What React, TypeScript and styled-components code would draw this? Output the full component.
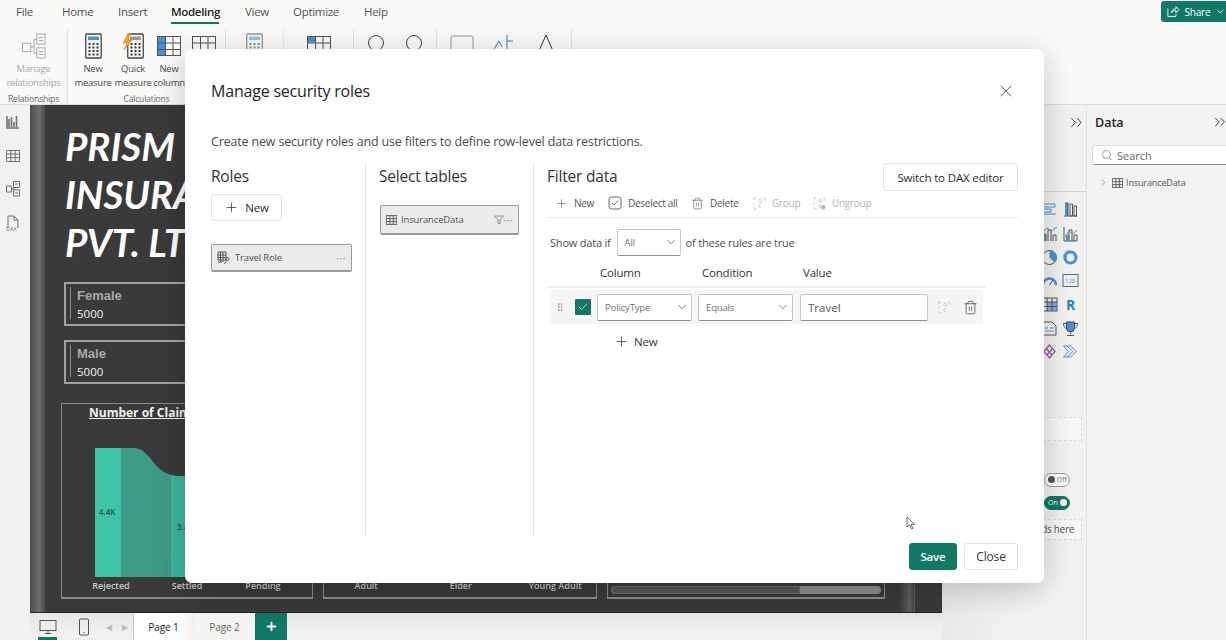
import React from "react"
import styled, { createGlobalStyle } from "styled-components"
import { ChevronDown, ChevronRight, ChevronsRight, Plus, Search, Trash2, X, Check, GripVertical } from "lucide-react"

const GlobalStyle = createGlobalStyle`
  html, body { margin: 0; padding: 0; }
  body { font-family: "Open Sans", "Noto Sans", sans-serif; color: #242424; background: #f3f3f1; overflow: hidden; }
  * { box-sizing: border-box; }
`

const Page = styled.div`
  position: relative;
  width: 1226px;
  height: 640px;
  overflow: hidden;
  display: flex;
  flex-direction: column;
`

/* ---------- top menu + ribbon ---------- */
const Top = styled.div`
  height: 105px;
  background: #fafaf9;
  border-bottom: 1px solid #dededc;
  flex: none;
`

const MenuBar = styled.div`
  height: 24px;
  display: flex;
  position: relative;
`

const MenuTab = styled.div<{ $w: number; $x: number; $active?: boolean }>`
  margin-left: ${p => p.$x}px;
  width: ${p => p.$w}px;
  flex: none;
  height: 24px;
  padding-top: 3px;
  font-size: 11.5px;
  line-height: 17px;
  letter-spacing: -0.3px;
  text-align: center;
  white-space: nowrap;
  color: ${p => (p.$active ? "#1c1c1c" : "#505050")};
  font-weight: ${p => (p.$active ? 600 : 400)};
  border-bottom: ${p => (p.$active ? "2px solid #117865" : "none")};
`

const ShareButton = styled.div`
  margin-left: auto;
  margin-top: 1px;
  width: 65px;
  height: 21px;
  background: #117865;
  border-radius: 3px 0 0 3px;
  color: #fff;
  font-size: 10px;
  letter-spacing: -0.2px;
  display: flex;
  align-items: center;
  gap: 5px;
  padding-left: 6px;
  white-space: nowrap;
`

const Ribbon = styled.div`
  display: flex;
  height: 80px;
  padding-top: 5px;
`

const RibbonGroup = styled.div<{ $w: number; $faded?: boolean }>`
  width: ${p => p.$w}px;
  flex: none;
  border-right: 1px solid #e2e2e0;
  display: flex;
  flex-direction: column;
  align-items: stretch;
  height: 76px;
  opacity: ${p => (p.$faded ? 0.55 : 1)};
`

const RibbonItems = styled.div<{ $pad?: number }>`
  flex: 1;
  display: flex;
  justify-content: ${p => (p.$pad ? "flex-start" : "center")};
  padding: 4px 0 0 ${p => p.$pad ?? 0}px;
`

const RibbonItem = styled.div<{ $w: number; $off?: boolean }>`
  width: ${p => p.$w}px;
  flex: none;
  display: flex;
  flex-direction: column;
  align-items: center;
  font-size: 9.5px;
  line-height: 14px;
  color: ${p => (p.$off ? "#a8a8a8" : "#4a4a4a")};
  text-align: center;
  white-space: nowrap;
  letter-spacing: -0.25px;
  svg { margin-bottom: 3px; }
`

const GroupLabel = styled.div`
  font-size: 8.5px;
  line-height: 12px;
  text-align: center;
  color: #666;
  letter-spacing: -0.15px;
`

/* ---------- body ---------- */
const Body = styled.div`
  flex: 1;
  display: flex;
  min-height: 0;
`

const Rail = styled.div`
  width: 30px;
  flex: none;
  background: #f2f2f0;
  display: flex;
  flex-direction: column;
  align-items: center;
  padding: 7px 4px 0 0;
  gap: 13.7px;
`

const CanvasColumn = styled.div`
  width: 912px;
  flex: none;
  display: flex;
  flex-direction: column;
`

const Canvas = styled.div`
  height: 508px;
  background: #3a3a3a;
  display: flex;
  border-bottom: 1px solid #222;
  overflow: hidden;
`

const CanvasStripe = styled.div`
  width: 15px;
  flex: none;
  background: linear-gradient(90deg, #4a4a4a, #6e6e6e 60%, #4c4c4c);
`

const CanvasInner = styled.div`
  flex: 1;
  padding: 17px 0 0 16px;
  display: flex;
  flex-direction: column;
  min-width: 0;
`

const ReportTitle = styled.div`
  padding-left: 4px;
  font-family: "Lato", sans-serif;
  font-style: italic;
  font-weight: 700;
  font-size: 38.5px;
  line-height: 48px;
  color: #fff;
  white-space: nowrap;
`

const StatGroup = styled.div`
  margin-top: 16px;
`

const StatCard = styled.div`
  width: 300px;
  height: 44px;
  margin: 0 0 14px 3px;
  border: 2px solid #a2a2a2;
  padding: 3px 0 0 4px;
  display: flex;
`

const StatBody = styled.div`
  border-left: 1px solid #8d8d8d;
  height: 32px;
  padding-left: 6px;
`

const StatLabel = styled.div`
  font-family: "Liberation Sans", sans-serif;
  font-weight: 700;
  font-size: 13px;
  line-height: 17px;
  color: #a8a8a8;
`

const StatValue = styled.div`
  font-size: 11.5px;
  line-height: 19px;
  font-weight: 500;
  color: #f0f0f0;
`

const BoxRow = styled.div`
  display: flex;
  margin-top: 5px;
  gap: 10px;
`

const ChartBox = styled.div<{ $w: number }>`
  position: relative;
  width: ${p => p.$w}px;
  height: 196px;
  border: 1px solid #8a8a8a;
  border-bottom-width: 2px;
  flex: none;
`

const ChartTitle = styled.div`
  margin-left: 27px;
  font-size: 12px;
  line-height: 17px;
  font-weight: 700;
  color: #f2f2f2;
  text-decoration: underline;
  white-space: nowrap;
`

const AxisLabels = styled.div<{ $col: number; $left: number }>`
  position: absolute;
  left: ${p => p.$left}px;
  bottom: 5px;
  font-size: 9px;
  line-height: 12px;
  font-weight: 600;
  color: #c8c8c8;
  display: grid;
  grid-auto-flow: column;
  grid-auto-columns: ${p => p.$col}px;
  text-align: center;
  white-space: nowrap;
`

const ScrollTrack = styled.div`
  position: absolute;
  left: 3px;
  right: 3px;
  bottom: 3px;
  height: 8px;
  border-radius: 4px;
  background: #8c8c8c;
  overflow: hidden;
`

const ScrollThumb = styled.div`
  height: 100%;
  background: #565656;
  border: 1px solid #6a6a6a;
  border-radius: 4px 0 0 4px;
`

const BandStripe = styled.div`
  width: 15px;
  flex: none;
  background: linear-gradient(90deg, #3c3c3c, #5f5f5f 70%, #444);
  border-right: 1px solid #5c5c5c;
`

const CanvasEnd = styled.div`
  width: 27px;
  flex: none;
`

const PageTabs = styled.div`
  flex: 1;
  display: flex;
  align-items: stretch;
  background: linear-gradient(180deg, #e6e6e4, #f0f0ee 80%);
  position: relative;
`

const DeviceTab = styled.div<{ $active?: boolean }>`
  width: 36px;
  flex: none;
  display: flex;
  align-items: center;
  justify-content: center;
  position: relative;
  ${p => p.$active && `&::after { content: ""; position: absolute; left: 8px; bottom: 0; width: 19px; height: 3px; background: #117865; }`}
`

const PagerArrows = styled.div`
  width: 30px;
  flex: none;
  display: flex;
  align-items: center;
  justify-content: space-between;
  padding: 0 4px;
  margin-right: 1px;
  color: #b9b9b9;
  font-size: 8px;
`

const PageTab = styled.div<{ $active?: boolean }>`
  width: ${p => (p.$active ? 60 : 61)}px;
  flex: none;
  margin-right: ${p => (p.$active ? 1 : 0)}px;
  display: flex;
  align-items: center;
  justify-content: center;
  background: ${p => (p.$active ? "linear-gradient(90deg,#fff 70%,#f3f3f3)" : "#f4f4f3")};
  border-left: ${p => (p.$active ? "1px solid #c4c4c4" : "none")};
  font-size: 10px;
  letter-spacing: -0.1px;
  color: ${p => (p.$active ? "#222" : "#666")};
`

const AddPage = styled.div`
  width: 32px;
  flex: none;
  background: #117865;
  color: #fff;
  display: flex;
  align-items: center;
  justify-content: center;
`

/* ---------- right panes ---------- */
const VizPane = styled.div`
  width: 145px;
  flex: none;
  background: linear-gradient(90deg, #e8e8e6, #f2f2f0 60%);
  border-right: 1px solid #e2e2e0;
  display: flex;
  flex-direction: column;
  align-items: flex-end;
`

const PaneHeader = styled.div`
  height: 87px;
  width: 100%;
  display: flex;
  justify-content: flex-end;
  padding: 8px 0 0 0;
  color: #333;
  border-bottom: 1px solid #d2d2d0;
`

const VizGrid = styled.div`
  display: grid;
  grid-template-columns: repeat(2, 21px);
  grid-auto-rows: 23.7px;
  margin: 6px 5px 0 0;
  place-items: center;
`

const DropWell = styled.div<{ $h: number; $top: number }>`
  width: 90px;
  height: ${p => p.$h}px;
  margin: ${p => p.$top}px 4px 0 0;
  border: 1px dashed #dadada;
  background: #f7f7f6;
  font-size: 10px;
  letter-spacing: -0.3px;
  color: #555;
  display: flex;
  align-items: center;
  justify-content: flex-end;
  padding-right: 7px;
  white-space: nowrap;
`

const Toggle = styled.div<{ $on?: boolean; $top: number }>`
  width: 26px;
  height: 14px;
  margin: ${p => p.$top}px 16px 0 0;
  border-radius: 7px;
  border: 1px solid ${p => (p.$on ? "#117865" : "#999")};
  background: ${p => (p.$on ? "#117865" : "#fff")};
  color: ${p => (p.$on ? "#fff" : "#777")};
  font-size: 7px;
  display: flex;
  flex-direction: ${p => (p.$on ? "row" : "row-reverse")};
  align-items: center;
  justify-content: space-between;
  padding: 0 2px 0 3px;
  &::after {
    content: "";
    width: 7px;
    height: 7px;
    border-radius: 50%;
    background: ${p => (p.$on ? "#fff" : "#555")};
  }
`

const DataPane = styled.div`
  flex: 1;
  background: #f3f3f2;
  padding: 8px 0 0 5px;
  min-width: 0;
`

const DataHeader = styled.div`
  display: flex;
  align-items: center;
  justify-content: space-between;
  font-size: 12.5px;
  font-weight: 600;
  padding-left: 3px;
  margin-right: -3px;
  height: 18px;
  color: #242424;
`

const SearchBox = styled.div`
  margin: 14px -2px 0 0;
  height: 20px;
  background: #fff;
  border: 1px solid #dcdcdc;
  border-bottom-color: #8a8a8a;
  border-radius: 3px 0 0 3px;
  display: flex;
  align-items: center;
  gap: 4px;
  padding-left: 8px;
  font-size: 11px;
  color: #6b6b6b;
`

const FieldRow = styled.div`
  margin-top: 11px;
  padding-left: 6px;
  display: flex;
  align-items: center;
  gap: 3px;
  font-size: 9px;
  letter-spacing: -0.12px;
  color: #555;
`

/* ---------- modal ---------- */
const Modal = styled.div`
  position: absolute;
  left: 185px;
  top: 49px;
  width: 859px;
  height: 534px;
  background: #fff;
  border-radius: 7px;
  box-shadow: 0 6px 32px rgba(0, 0, 0, 0.22);
  padding: 0 26px;
  display: flex;
  flex-direction: column;
`

const ModalHeader = styled.div`
  height: 84px;
  flex: none;
  display: flex;
  align-items: center;
  justify-content: space-between;
  padding: 0 2px 1px 0;
  color: #444;
`

const ModalTitle = styled.div`
  font-size: 16px;
  font-weight: 500;
  letter-spacing: -0.2px;
  color: #242424;
`

const Description = styled.div`
  font-size: 12.5px;
  line-height: 18px;
  height: 30px;
  letter-spacing: -0.17px;
  color: #4a4a4a;
`

const Columns = styled.div`
  display: flex;
  height: 372px;
  flex: none;
`

const Column = styled.div<{ $w?: number; $pad?: number }>`
  width: ${p => (p.$w ? `${p.$w}px` : "auto")};
  flex: ${p => (p.$w ? "none" : 1)};
  border-right: ${p => (p.$w ? "1px solid #e4e4e4" : "none")};
  padding-left: ${p => p.$pad ?? 0}px;
  min-width: 0;
`

const ColumnHeading = styled.div`
  font-size: 15.5px;
  line-height: 26px;
  letter-spacing: -0.2px;
  color: #333;
`

const OutlineButton = styled.div<{ $w: number; $h: number }>`
  width: ${p => p.$w}px;
  height: ${p => p.$h}px;
  flex: none;
  display: flex;
  align-items: center;
  justify-content: center;
  gap: 6px;
  border: 1px solid #e2e2e2;
  border-radius: 3px;
  background: #fff;
  font-size: 11.5px;
  font-weight: 500;
  letter-spacing: -0.15px;
  color: #2b2b2b;
`

const RolesNew = styled(OutlineButton)`
  margin-top: 5px;
`

const ListItem = styled.div<{ $w: number; $h: number; $top: number; $left?: number }>`
  width: ${p => p.$w}px;
  height: ${p => p.$h}px;
  margin: ${p => p.$top}px 0 0 ${p => p.$left ?? 0}px;
  display: flex;
  align-items: center;
  gap: 4px;
  padding: 0 5px;
  background: #ebebeb;
  border: 1px solid #9a9a9a;
  border-bottom-width: 2px;
  border-radius: 2px;
  font-size: 9.5px;
  letter-spacing: -0.15px;
  color: #555;
`

const ItemDots = styled.span`
  margin-left: auto;
  display: flex;
  align-items: center;
  font-size: 10px;
  letter-spacing: 0.5px;
  color: #888;
`

const FilterHead = styled.div`
  display: flex;
  justify-content: space-between;
  align-items: flex-start;
`

const FilterToolbar = styled.div`
  height: 27px;
  padding: 0 0 2px 8px;
  display: flex;
  align-items: center;
  border-bottom: 1px solid #ececec;
`

const ToolItem = styled.div<{ $w: number; $off?: boolean }>`
  width: ${p => p.$w}px;
  flex: none;
  display: flex;
  align-items: center;
  gap: 6px;
  font-size: 10px;
  letter-spacing: -0.28px;
  white-space: nowrap;
  color: ${p => (p.$off ? "#b4b4b4" : "#555")};
`

const ShowRow = styled.div`
  margin-top: 10px;
  padding-left: 3px;
  height: 28px;
  display: flex;
  align-items: center;
  font-size: 11px;
  letter-spacing: -0.2px;
  color: #4f4f4f;
  white-space: nowrap;
`

const Select = styled.div<{ $w: number; $h: number; $m?: number }>`
  width: ${p => p.$w}px;
  height: ${p => p.$h}px;
  flex: none;
  margin-right: ${p => p.$m ?? 0}px;
  display: flex;
  align-items: center;
  justify-content: space-between;
  padding: 0 2px 0 7px;
  background: #fff;
  border: 1px solid #c8c8c8;
  border-bottom-color: #8e8e8e;
  border-radius: 2px;
  font-size: 9.5px;
  letter-spacing: -0.15px;
  color: #707070;
  svg { color: #505050; }
`

const ShowSelect = styled(Select)`
  margin: 0 5px 0 6px;
`

const RuleHeaders = styled.div`
  height: 32px;
  width: 439px;
  padding: 3px 0 0 53px;
  display: flex;
  align-items: center;
  font-size: 11.5px;
  font-weight: 500;
  letter-spacing: -0.2px;
  color: #333;
  border-bottom: 2px solid #eeeeee;
`

const RuleHead = styled.div<{ $w: number }>`
  width: ${p => p.$w}px;
  flex: none;
`

const RuleRow = styled.div`
  width: 433px;
  height: 34px;
  margin: 2px 0 0 3px;
  background: #f5f5f5;
  display: flex;
  align-items: center;
  padding-left: 5px;
  color: #777;
`

const CheckMark = styled.div`
  width: 16px;
  height: 16px;
  margin: 0 6px 0 10px;
  flex: none;
  background: #117865;
  border-radius: 1px;
  color: #fff;
  display: flex;
  align-items: center;
  justify-content: center;
`

const ValueInput = styled.div`
  width: 128px;
  height: 27px;
  flex: none;
  display: flex;
  align-items: center;
  padding-left: 7px;
  background: #fff;
  border: 1px solid #c8c8c8;
  border-bottom-color: #8e8e8e;
  border-radius: 2px;
  font-size: 11.5px;
  color: #555;
`

const RuleActions = styled.div`
  width: 55px;
  flex: none;
  display: flex;
  align-items: center;
  justify-content: space-between;
  padding: 0 5px 0 10px;
  color: #444;
`

const RuleNew = styled.div`
  margin: 10px 0 0 67px;
  display: flex;
  align-items: center;
  gap: 5px;
  font-size: 11.5px;
  font-weight: 500;
  letter-spacing: -0.15px;
  color: #333;
`

const ModalFooter = styled.div`
  flex: 1;
  display: flex;
  justify-content: flex-end;
  align-items: flex-start;
  gap: 7px;
  padding-top: 8px;
`

const SaveButton = styled(OutlineButton)`
  background: #117865;
  border-color: #117865;
  color: #fff;
  font-weight: 600;
`

const CloseButton = styled(OutlineButton)`
  font-weight: 400;
  color: #333;
  font-size: 12px;
`

const Cursor = styled.svg`
  position: absolute;
  left: 906px;
  top: 516px;
`

/* ---------- drawings ---------- */
const BLUE = "#4a90d9"

const GroupGlyph = ({ badge }: { badge?: boolean }) => (
  <svg width="13" height="13" viewBox="0 0 14 14" fill="none" stroke="#c2c2c2" strokeWidth="1">
    <path d="M1 1h3M1 1v3M1 6v3M1 11v2h3M6.500 2.500h3v3h-3zM6.500 8.500h3M6.500 8.500v3h2M11 1h2v3" strokeDasharray="2 1" />
    {badge && <circle cx="11" cy="11" r="2.500" fill="#b8b8b8" stroke="none" />}
  </svg>
)

const RelIcon = () => (
  <svg width="24" height="26" viewBox="0 0 26 28" fill="none" stroke="#a0a0a0" strokeWidth="1">
    <rect x="0.5" y="11" width="9" height="9" />
    <rect x="16" y="1" width="9" height="11" />
    <rect x="16" y="16" width="9" height="11" />
    <path d="M9.500 15H13M13 7v15M13 7h3M13 22h3M18 5h5M18 8h5M18 20h5M18 23h5" />
  </svg>
)

const CalcIcon = ({ bolt }: { bolt?: boolean }) => (
  <svg width={bolt ? 22 : 17} height="26" viewBox={bolt ? "-5 0 22 26" : "0 0 17 26"} fill="none">
    <rect x="0.75" y="1" width="15.500" height="24" rx="1" stroke="#444" strokeWidth="1.300" />
    <rect x="3" y="3.500" width="11" height="3.500" fill={bolt ? "#9a9a9a" : BLUE} />
    {[10, 13.5, 17, 20.5].map(y => [3.5, 7.5, 11.5].map(x => <rect key={`${x}-${y}`} x={x} y={y} width="2" height="2" fill="#333" />))}
    {bolt && <path d="M2-1-4 10h4l-3 7 8-10H1l3-8z" fill="#f0a030" stroke="#d07a10" strokeWidth=".5" />}
  </svg>
)

const TableIcon = ({ fill, w = 24, h = 20 }: { fill?: "col" | "corner"; w?: number; h?: number }) => (
  <svg width={w} height={h} viewBox="0 0 24 20" fill="none" stroke="#555" strokeWidth={w < 16 ? 2 : 1}>
    {fill === "col" && <rect x="0.5" y="0.5" width="8" height="19" fill={BLUE} stroke="none" />}
    {fill === "corner" && <rect x="0.5" y="0.5" width="8" height="6" fill={BLUE} stroke="none" />}
    <rect x="0.5" y="0.5" width="23" height="19" />
    <path d="M8.500.5v19M16 .5v19M.5 7h23M.5 13.500h23" />
  </svg>
)

const RoleGlyph = () => (
  <svg width="14" height="14" viewBox="0 0 14 14" fill="none" stroke="#555" strokeWidth="1">
    <path d="M1 1h8v8H1zM1 4h8M1 6.500h8M3.500 1v10M6 1v10M1 11h4" />
    <circle cx="10.500" cy="8" r="1.600" />
    <path d="M9.500 9.500 7.500 13" />
  </svg>
)

const CircleIcon = () => (
  <svg width="20" height="26" fill="none">
    <circle cx="10" cy="10" r="7.500" stroke="#444" />
    <path d="M12 17.500a3 3 0 0 0 5 1" stroke={BLUE} strokeWidth="1.500" />
  </svg>
)

const RailIcon = ({ kind }: { kind: string }) => (
  <svg width="16" height="20" viewBox="0 0 16 20" fill="none" stroke="#707070" strokeWidth="1">
    {kind === "report" && <path d="M2 4v12h12M4 15V7M6.500 15V5M9 15v-5M11.500 15V4" strokeWidth="1.600" />}
    {kind === "table" && <path d="M1.500 4.500h13v11h-13zM1.500 8h13M1.500 11.700h13M5.800 4.500v11M10.200 4.500v11" />}
    {kind === "model" && <path d="M1.500 7h5v6h-5zM8.500 2.500h6v6h-6zM8.500 11h6v6h-6zM6.500 10h2M8.500 5v10M10 5h3M10 14h3" />}
    {kind === "dax" && <path d="M3 15V3h6l4 4v8M9 3v4h4" />}
    {kind === "dax" && <text x="1" y="18" fontSize="5.500" stroke="none" fill="#707070">DAX</text>}
  </svg>
)

const VizIcon = ({ kind }: { kind: string }) => {
  return (
    <svg width="17" height="17" viewBox="0 0 17 17" fill="none" stroke="#555" strokeWidth="1">
      {kind === "bars" && <path d="M2 3h12v3H2zM2 8h8v3H2zM2 13h13" stroke={BLUE} />}
      {kind === "cols" && <><path d="M2 15h13" /><rect x="3" y="2" width="3" height="13" fill={BLUE} stroke="none" /><path d="M8 3h2.500v12H8zM12 5h2.500v10H12zM3 2h3v13" /></>}
      {kind === "combo" && <><path d="M2 16V9h3v7M7 16V5h3v11M12 16v-6h3v6" /><rect x="2.500" y="9" width="2.500" height="7" fill={BLUE} stroke="none" /><path d="M1 8l5-5 4 3 6-4" stroke={BLUE} /></>}
      {kind === "combo2" && <><path d="M2 16V2M2 16h13M7 16V5h3v11M12 16v-6h3v6" /><rect x="4" y="10" width="3" height="6" fill={BLUE} stroke="none" /><path d="M3 12l4-6 4 3 4-4" stroke={BLUE} /></>}
      {kind === "pie" && <><circle cx="8.500" cy="8.500" r="7" /><path d="M8.500 1.500a7 7 0 0 1 5 12L8.500 8.500z" fill={BLUE} stroke="none" /></>}
      {kind === "donut" && <><circle cx="8.500" cy="8.500" r="5.500" strokeWidth="3.200" stroke={BLUE} /><path d="M8.500 1a7.500 7.500 0 0 0-7.500 7.500" stroke="#8fbce8" strokeWidth="1" /></>}
      {kind === "gauge" && <><path d="M2 13a6.500 6.500 0 0 1 13 0" strokeWidth="2.500" stroke={BLUE} /><path d="M8.500 13 12 8" /></>}
      {kind === "card" && <><rect x="1" y="2.500" width="15" height="12" fill="#eef3f8" stroke="#666" /><text x="3" y="11" fontSize="6" stroke="none" fill={BLUE}>123</text></>}
      {kind === "matrix" && <><rect x="1" y="2" width="15" height="13" /><rect x="6" y="6" width="10" height="9" fill={BLUE} opacity=".7" stroke="none" /><path d="M1 6h15M1 10.500h15M6 2v13M11 2v13" /></>}
      {kind === "r" && <text x="4" y="14" fontSize="14" fontWeight="700" stroke="none" fill="#2a7fc0">R</text>}
      {kind === "doc" && <><path d="M2 2h9l4 4v9H2z" /><path d="M4 8h3M9 8h4M4 11h9" stroke={BLUE} /></>}
      {kind === "trophy" && <><path d="M4.500 2h8v6a4 4 0 0 1-8 0z" fill={BLUE} stroke="#444" /><path d="M4.500 3.500H1.500c0 3 1 4.500 3.500 5M12.500 3.500h3c0 3-1 4.500-3.500 5M8.500 12v2.500M5 15.500h7" /></>}
      {kind === "diamond" && <path d="M8.500 2 3 8.500l5.500 6.500 5.500-6.500zM5 5l6 7M12 5l-6 7" stroke="#9c5aa8" strokeWidth="1.300" />}
      {kind === "chevrons" && <path d="M1.500 3h7l6 5.500-6 5.500h-7l5-5.500zM5 3l6 5.500L5 14" stroke={BLUE} />}
    </svg>
  )
}

const vizKinds = ["bars", "cols", "combo", "combo2", "pie", "donut", "gauge", "card", "matrix", "r", "doc", "trophy", "diamond", "chevrons"]

const FunnelChart = () => (
  <svg width="249" height="130" viewBox="0 0 249 130" style={{ position: "absolute", left: 0, top: 44 }}>
    <rect x="33" y="0" width="26" height="129" fill="#3fc4a8" />
    <path d="M59 0h12c20 0 18 28 48 28h130v101H59z" fill="#3f9a86" />
    <rect x="109" y="28" width="26" height="101" fill="#3cb8a0" />
    <text x="37" y="67" fontSize="8" fill="#2f4f47" fontWeight="600">4.4K</text>
    <text x="115" y="82" fontSize="8" fill="#2f4f47" fontWeight="600">3.4K</text>
  </svg>
)

export default function App() {
  return (
    <Page>
      <GlobalStyle />
      <Top>
        <MenuBar>
          <MenuTab $x={16} $w={16}>File</MenuTab>
          <MenuTab $x={30} $w={30}>Home</MenuTab>
          <MenuTab $x={26} $w={28}>Insert</MenuTab>
          <MenuTab $x={25} $w={48} $active>Modeling</MenuTab>
          <MenuTab $x={26} $w={22}>View</MenuTab>
          <MenuTab $x={26} $w={45}>Optimize</MenuTab>
          <MenuTab $x={26} $w={23}>Help</MenuTab>
          <ShareButton>
            <svg width="13" height="13" viewBox="0 0 14 13" fill="none" stroke="#fff" strokeWidth="1"><path d="M1 3v9h9V9M5 8c0-3 2-4.500 5-4.500V1l3.500 3.500L10 8V5.500C8 5.500 6 6 5 8z" /></svg>
            Share
            <ChevronDown size={11} />
          </ShareButton>
        </MenuBar>
        <Ribbon>
          <RibbonGroup $w={68}>
            <RibbonItems>
              <RibbonItem $w={66} $off><RelIcon />Manage<br />relationships</RibbonItem>
            </RibbonItems>
            <GroupLabel>Relationships</GroupLabel>
          </RibbonGroup>
          <RibbonGroup $w={158}>
            <RibbonItems $pad={5}>
              <RibbonItem $w={40}><CalcIcon />New<br />measure</RibbonItem>
              <RibbonItem $w={40}><CalcIcon bolt />Quick<br />measure</RibbonItem>
              <RibbonItem $w={32}><TableIcon fill="col" w={24} h={26} />New<br />column</RibbonItem>
              <RibbonItem $w={38}><TableIcon w={24} h={26} /></RibbonItem>
            </RibbonItems>
            <GroupLabel>Calculations</GroupLabel>
          </RibbonGroup>
          <RibbonGroup $w={58} $faded>
            <RibbonItems><RibbonItem $w={40}><CalcIcon /></RibbonItem></RibbonItems>
          </RibbonGroup>
          <RibbonGroup $w={70}>
            <RibbonItems><RibbonItem $w={40}><TableIcon fill="corner" w={24} h={26} /></RibbonItem></RibbonItems>
          </RibbonGroup>
          <RibbonGroup $w={83}>
            <RibbonItems>
              <RibbonItem $w={38}><CircleIcon /></RibbonItem>
              <RibbonItem $w={38}><CircleIcon /></RibbonItem>
            </RibbonItems>
          </RibbonGroup>
          <RibbonGroup $w={135}>
            <RibbonItems>
              <RibbonItem $w={42}><svg width="24" height="26" fill="none" stroke="#999"><rect x="1" y="3" width="22" height="22" rx="2" /></svg></RibbonItem>
              <RibbonItem $w={42}><svg width="24" height="26" fill="none" stroke="#2a7fc0"><path d="M2 16l5-8 3 6M15 2v14M15 8h6" /></svg></RibbonItem>
              <RibbonItem $w={42}><svg width="20" height="26" fill="none" stroke="#333"><path d="M3 18 10 2l7 16" /></svg></RibbonItem>
            </RibbonItems>
          </RibbonGroup>
        </Ribbon>
      </Top>

      <Body>
        <Rail>
          <RailIcon kind="report" />
          <RailIcon kind="table" />
          <RailIcon kind="model" />
          <RailIcon kind="dax" />
        </Rail>

        <CanvasColumn>
          <Canvas>
            <CanvasStripe />
            <CanvasInner>
              <ReportTitle>PRISM<br />INSURA<br />PVT. LT</ReportTitle>
              <StatGroup>
                <StatCard>
                  <StatBody>
                    <StatLabel>Female</StatLabel>
                    <StatValue>5000</StatValue>
                  </StatBody>
                </StatCard>
                <StatCard>
                  <StatBody>
                    <StatLabel>Male</StatLabel>
                    <StatValue>5000</StatValue>
                  </StatBody>
                </StatCard>
              </StatGroup>
              <BoxRow>
                <ChartBox $w={252}>
                  <ChartTitle>Number of Claim</ChartTitle>
                  <FunnelChart />
                  <AxisLabels $col={76} $left={11}>
                    <span>Rejected</span>
                    <span>Settled</span>
                    <span>Pending</span>
                  </AxisLabels>
                </ChartBox>
                <ChartBox $w={274}>
                  <AxisLabels $col={94.5} $left={-5}>
                    <span>Adult</span>
                    <span>Elder</span>
                    <span>Young Adult</span>
                  </AxisLabels>
                </ChartBox>
                <ChartBox $w={278}>
                  <ScrollTrack>
                    <ScrollThumb style={{ width: `${(190 / 272) * 100}%` }} />
                  </ScrollTrack>
                </ChartBox>
              </BoxRow>
            </CanvasInner>
            <BandStripe />
            <CanvasEnd />
          </Canvas>
          <PageTabs>
            <DeviceTab $active>
              <svg width="18" height="16" viewBox="0 0 18 16" fill="none" stroke="#555"><rect x="1" y="1.500" width="16" height="10" /><path d="M9 11.500V14M6 14.500h6" /></svg>
            </DeviceTab>
            <DeviceTab>
              <svg width="12" height="18" viewBox="0 0 12 18" fill="none" stroke="#555"><rect x="1.500" y="1" width="9" height="16" rx="1" /><path d="M5.500 14.500h1" /></svg>
            </DeviceTab>
            <PagerArrows><span>◀</span><span>▶</span></PagerArrows>
            <PageTab $active>Page 1</PageTab>
            <PageTab>Page 2</PageTab>
            <AddPage><Plus size={13} strokeWidth={3.5} /></AddPage>
          </PageTabs>
        </CanvasColumn>

        <VizPane>
          <PaneHeader><ChevronsRight size={19} strokeWidth={1.2} /></PaneHeader>
          <VizGrid>
            {vizKinds.map(k => <VizIcon key={k} kind={k} />)}
          </VizGrid>
          <DropWell $h={24} $top={53} />
          <Toggle $top={32}>Off</Toggle>
          <Toggle $top={9} $on>On</Toggle>
          <DropWell $h={21} $top={9}>ds here</DropWell>
        </VizPane>

        <DataPane>
          <DataHeader>Data <ChevronsRight size={18} strokeWidth={1.2} /></DataHeader>
          <SearchBox><Search size={12} strokeWidth={1.3} />Search</SearchBox>
          <FieldRow>
            <ChevronRight size={11} strokeWidth={1.2} />
            <TableIcon w={11} h={10} />
            InsuranceData
          </FieldRow>
        </DataPane>
      </Body>

      <Modal>
        <ModalHeader>
          <ModalTitle>Manage security roles</ModalTitle>
          <X size={20} strokeWidth={1} />
        </ModalHeader>
        <Description>Create new security roles and use filters to define row-level data restrictions.</Description>
        <Columns>
          <Column $w={155}>
            <ColumnHeading>Roles</ColumnHeading>
            <RolesNew $w={71} $h={27}><Plus size={15} strokeWidth={1.2} />New</RolesNew>
            <ListItem $w={141} $h={28} $top={23}>
              <RoleGlyph />
              Travel Role
              <ItemDots>···</ItemDots>
            </ListItem>
          </Column>
          <Column $w={168} $pad={13}>
            <ColumnHeading>Select tables</ColumnHeading>
            <ListItem $w={139} $h={30} $top={16} $left={1}>
              <TableIcon w={11} h={10} />
              InsuranceData
              <ItemDots>
                <svg width="10" height="10" viewBox="0 0 10 10" fill="none" stroke="#777" strokeWidth=".8"><path d="M.5 1h9L6 5v4L4 8V5z" /></svg>
                ···
              </ItemDots>
            </ListItem>
          </Column>
          <Column $pad={13}>
            <FilterHead>
              <ColumnHeading>Filter data</ColumnHeading>
              <OutlineButton $w={135} $h={28}>Switch to DAX editor</OutlineButton>
            </FilterHead>
            <FilterToolbar>
              <ToolItem $w={53}><Plus size={13} strokeWidth={1.1} />New</ToolItem>
              <ToolItem $w={83}>
                <svg width="14" height="14" viewBox="0 0 14 14" fill="none" stroke="#666"><rect x="1" y="1" width="12" height="12" rx="2.500" /><path d="M4 7l2 2 4-4.500" /></svg>
                Deselect all
              </ToolItem>
              <ToolItem $w={62}><Trash2 size={13} strokeWidth={1.1} />Delete</ToolItem>
              <ToolItem $w={60} $off><GroupGlyph />Group</ToolItem>
              <ToolItem $w={60} $off><GroupGlyph badge />Ungroup</ToolItem>
            </FilterToolbar>
            <ShowRow>
              Show data if
              <ShowSelect $w={64} $h={27}>All <ChevronDown size={14} strokeWidth={1.2} /></ShowSelect>
              of these rules are true
            </ShowRow>
            <RuleHeaders>
              <RuleHead $w={102}>Column</RuleHead>
              <RuleHead $w={101}>Condition</RuleHead>
              <RuleHead $w={100}>Value</RuleHead>
            </RuleHeaders>
            <RuleRow>
              <GripVertical size={12} strokeWidth={1.5} />
              <CheckMark><Check size={12} strokeWidth={1.4} /></CheckMark>
              <Select $w={95} $h={27} $m={6}>PolicyType <ChevronDown size={14} strokeWidth={1.2} /></Select>
              <Select $w={95} $h={27} $m={7}>Equals <ChevronDown size={14} strokeWidth={1.2} /></Select>
              <ValueInput>Travel</ValueInput>
              <RuleActions>
                <GroupGlyph />
                <Trash2 size={15} strokeWidth={1.2} />
              </RuleActions>
            </RuleRow>
            <RuleNew><Plus size={15} strokeWidth={1.2} />New</RuleNew>
          </Column>
        </Columns>
        <ModalFooter>
          <SaveButton $w={48} $h={27}>Save</SaveButton>
          <CloseButton $w={54} $h={27}>Close</CloseButton>
        </ModalFooter>
      </Modal>

      <Cursor width="10" height="14" viewBox="0 0 10 14" fill="#fff" stroke="#444" strokeWidth=".8">
        <path d="M1 1v10l2.500-2 2 4 1.500-.8-2-3.700H8.500z" />
      </Cursor>
    </Page>
  )
}
